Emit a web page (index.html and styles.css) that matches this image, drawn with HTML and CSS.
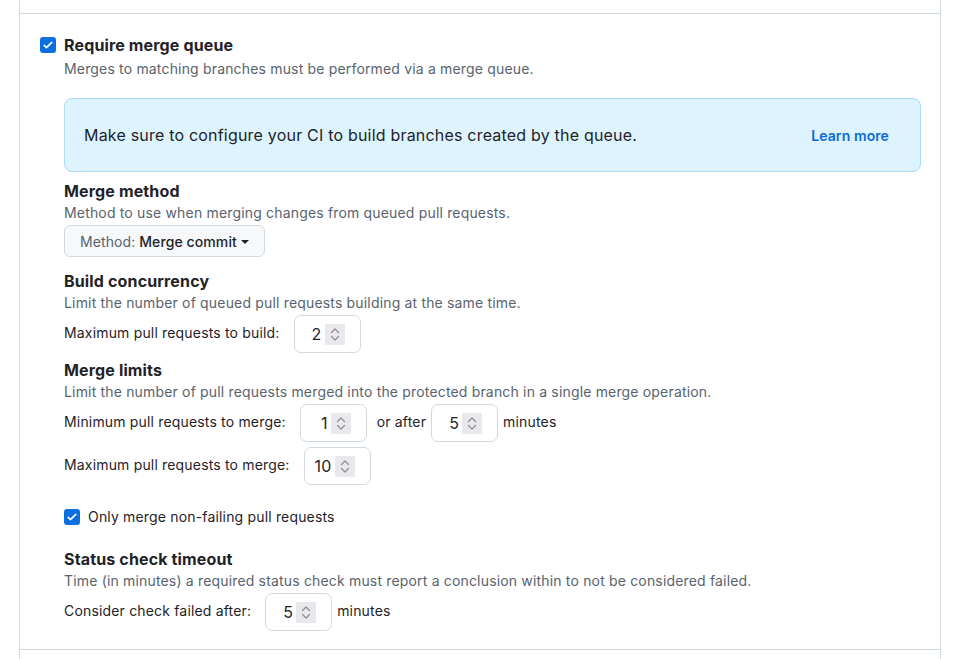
FILE: index.html
```html
<!DOCTYPE html>
<html lang="en">
<head>
<meta charset="utf-8">
<title>Merge queue settings</title>
<link rel="stylesheet" href="styles.css">
</head>
<body>
<div class="panel">
  <div class="prev"></div>
  <section class="rule">
    <div class="check-col">
      <span class="checkbox"><svg viewBox="0 0 16 16" width="12" height="12"><path d="M3 8.4l3 3 7-7" fill="none" stroke="#fff" stroke-width="2.2" stroke-linecap="round" stroke-linejoin="round"/></svg></span>
    </div>
    <div class="content">
      <h2 class="title">Require merge queue</h2>
      <p class="desc">Merges to matching branches must be performed via a merge queue.</p>

      <div class="flash">
        <span>Make sure to configure your CI to build branches created by the queue.</span>
        <a class="learn" href="#">Learn more</a>
      </div>

      <h3 class="heading first">Merge method</h3>
      <p class="desc">Method to use when merging changes from queued pull requests.</p>
      <button class="btn" type="button"><span class="btn-muted">Method:</span> Merge commit<span class="caret"></span></button>

      <h3 class="heading h-build">Build concurrency</h3>
      <p class="desc">Limit the number of queued pull requests building at the same time.</p>
      <div class="row">
        <span class="label">Maximum pull requests to build:</span>
        <span class="num"><span class="val">2</span><span class="spin"><svg viewBox="0 0 20 21" width="20" height="21"><path d="M6.5 8.5l3.5-3.5 3.5 3.5M6.5 12.5l3.5 3.5 3.5-3.5" fill="none" stroke="#8c8c92" stroke-width="1.2" stroke-linecap="round" stroke-linejoin="round"/></svg></span></span>
      </div>

      <h3 class="heading h-limits">Merge limits</h3>
      <p class="desc">Limit the number of pull requests merged into the protected branch in a single merge operation.</p>
      <div class="row">
        <span class="label">Minimum pull requests to merge:</span>
        <span class="num"><span class="val">1</span><span class="spin"><svg viewBox="0 0 20 21" width="20" height="21"><path d="M6.5 8.5l3.5-3.5 3.5 3.5M6.5 12.5l3.5 3.5 3.5-3.5" fill="none" stroke="#8c8c92" stroke-width="1.2" stroke-linecap="round" stroke-linejoin="round"/></svg></span></span>
        <span class="mid">or after</span>
        <span class="num"><span class="val">5</span><span class="spin"><svg viewBox="0 0 20 21" width="20" height="21"><path d="M6.5 8.5l3.5-3.5 3.5 3.5M6.5 12.5l3.5 3.5 3.5-3.5" fill="none" stroke="#8c8c92" stroke-width="1.2" stroke-linecap="round" stroke-linejoin="round"/></svg></span></span>
        <span class="after">minutes</span>
      </div>
      <div class="row row2">
        <span class="label">Maximum pull requests to merge:</span>
        <span class="num"><span class="val">10</span><span class="spin"><svg viewBox="0 0 20 21" width="20" height="21"><path d="M6.5 8.5l3.5-3.5 3.5 3.5M6.5 12.5l3.5 3.5 3.5-3.5" fill="none" stroke="#8c8c92" stroke-width="1.2" stroke-linecap="round" stroke-linejoin="round"/></svg></span></span>
      </div>

      <label class="inline-check">
        <span class="checkbox"><svg viewBox="0 0 16 16" width="12" height="12"><path d="M3 8.4l3 3 7-7" fill="none" stroke="#fff" stroke-width="2.2" stroke-linecap="round" stroke-linejoin="round"/></svg></span>
        <span>Only merge non-failing pull requests</span>
      </label>

      <h3 class="heading h-status">Status check timeout</h3>
      <p class="desc">Time (in minutes) a required status check must report a conclusion within to not be considered failed.</p>
      <div class="row">
        <span class="label">Consider check failed after:</span>
        <span class="num"><span class="val">5</span><span class="spin"><svg viewBox="0 0 20 21" width="20" height="21"><path d="M6.5 8.5l3.5-3.5 3.5 3.5M6.5 12.5l3.5 3.5 3.5-3.5" fill="none" stroke="#8c8c92" stroke-width="1.2" stroke-linecap="round" stroke-linejoin="round"/></svg></span></span>
        <span class="after">minutes</span>
      </div>
    </div>
  </section>
  <div class="next"></div>
</div>
</body>
</html>
```

FILE: styles.css
```css
* { box-sizing: border-box; }
html, body { margin: 0; padding: 0; background: #ffffff; }
body {
  font-family: Inter, "Liberation Sans", Arial, sans-serif;
  color: #1f2328;
  font-size: 14px;
  letter-spacing: 0.17px;
  overflow: hidden;
}
.panel {
  margin-left: 19px;
  width: 922px;
  border-left: 1px solid #d1d9e0;
  border-right: 1px solid #d1d9e0;
}
.prev { height: 14px; border-bottom: 1px solid #d1d9e0; }
.next { height: 40px; }
.rule {
  display: flex;
  padding: 20px 19px 18px 20px;
  border-bottom: 1px solid #d1d9e0;
}
.check-col { width: 24px; flex: none; padding-top: 3px; }
.checkbox {
  display: flex;
  align-items: center;
  justify-content: center;
  width: 16px;
  height: 16px;
  border-radius: 3px;
  background: #0b6fe0;
}
.content { flex: 1; min-width: 0; }
.title { margin: 0; font-size: 16px; line-height: 22px; font-weight: 700; letter-spacing: 0.15px; }
.desc { margin: 0; font-size: 14px; line-height: 22px; color: #59636e; }
.title + .desc { margin-top: 2px; }
.flash {
  margin-top: 18px;
  height: 74px;
  display: flex;
  align-items: center;
  justify-content: space-between;
  padding: 0 31px 0 19px;
  background: #ddf4ff;
  border: 1px solid #a9dcfd;
  border-radius: 8px;
  font-size: 16px;
  letter-spacing: 0.2px;
}
.learn { color: #0969da; font-weight: 600; font-size: 14px; text-decoration: none; letter-spacing: 0.1px; }
.heading { margin: 0; font-size: 16px; line-height: 22px; font-weight: 700; letter-spacing: 0.15px; }
.heading.first { margin-top: 8px; }
.h-build { margin-top: 13px; }
.h-limits { margin-top: 6px; }
.h-status { margin-top: 21px; }
.btn {
  margin-top: 1px;
  display: inline-flex;
  align-items: center;
  height: 32px;
  padding: 0 15px;
  background: #f6f8fa;
  border: 1px solid #d1d9e0;
  border-radius: 6px;
  font-family: inherit;
  font-size: 14px;
  letter-spacing: 0.1px;
  font-weight: 500;
  color: #1f2328;
  white-space: pre;
}
.btn-muted { color: #59636e; font-weight: 400; }
.caret {
  display: inline-block;
  margin-left: 4px;
  margin-top: 1px;
  width: 0; height: 0;
  border-left: 4px solid transparent;
  border-right: 4px solid transparent;
  border-top: 4px solid #1f2328;
}
.row { display: flex; align-items: center; margin-top: 1px; }
.row2 { margin-top: 5px; }
.label { margin-right: 14px; margin-bottom: 3px; }
.mid { margin: 0 5px 3px 10px; }
.after { margin: 0 0 3px 5px; }
.num {
  display: inline-flex;
  align-items: center;
  justify-content: flex-end;
  width: 67px;
  height: 38px;
  padding-right: 15px;
  border: 1px solid #d1d9e0;
  border-radius: 7px;
  background: #fff;
  font-size: 16px;
  color: #1f2328;
}
.val { margin-right: 3px; }
.spin {
  display: flex;
  width: 20px;
  height: 21px;
  background: #e9e9ed;
}
.inline-check {
  display: flex;
  align-items: center;
  gap: 8px;
  margin-top: 22px;
  line-height: 20px;
}
```
